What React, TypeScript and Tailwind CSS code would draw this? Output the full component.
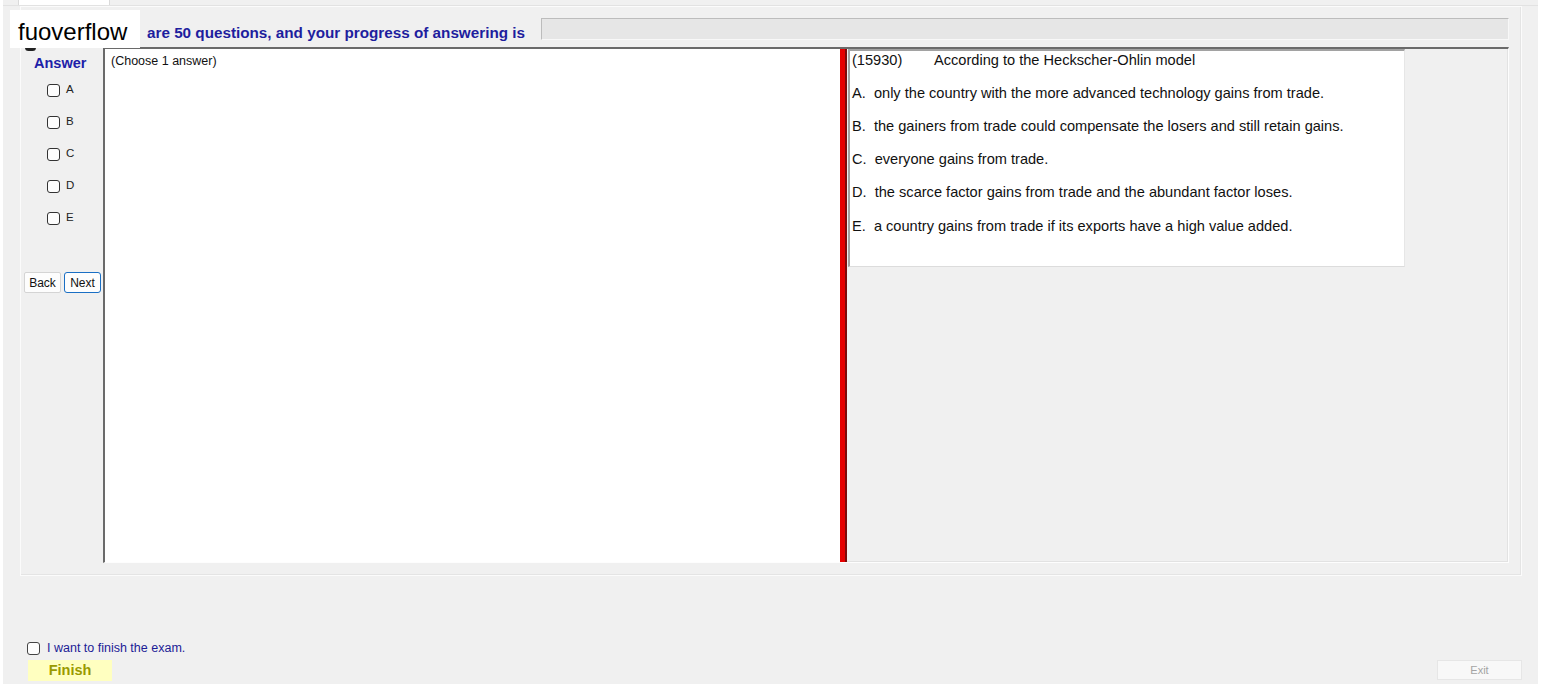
import React from 'react';

const options = [
  { key: 'A', text: 'only the country with the more advanced technology gains from trade.' },
  { key: 'B', text: 'the gainers from trade could compensate the losers and still retain gains.' },
  { key: 'C', text: 'everyone gains from trade.' },
  { key: 'D', text: 'the scarce factor gains from trade and the abundant factor loses.' },
  { key: 'E', text: 'a country gains from trade if its exports have a high value added.' },
];

const Box: React.FC<{ className?: string }> = ({ className }) => (
  <span className={'inline-block w-[13px] h-[13px] rounded-[3px] border border-[#333] bg-[#fdfdfd] ' + (className || '')} />
);

const App: React.FC = () => {
  return (
    <div className="relative w-[1542px] h-[690px] bg-white overflow-hidden font-['Liberation_Sans',Arial,sans-serif] text-black">
      {/* watermark */}
      <div className="absolute left-[25px] top-[44px] w-[11px] h-[7px] rounded-full bg-[#222]" />
      <div className="absolute left-[10px] top-[10px] w-[130px] h-[38px] bg-white flex items-center pl-[8px] pt-[6px] text-[24px] leading-none text-black z-10">
        fuoverflow
      </div>

      <div className="ml-[3px] w-[1535px] h-[684px] bg-[#f0f0f0] flex flex-col">
        {/* tab strip */}
        <div className="h-[6px] flex border-b border-[#e2e2e2]">
          <div className="ml-[15px] w-[92px] h-full bg-white border-x border-[#dadada]" />
        </div>

        {/* main panel */}
        <div className="ml-[17px] w-[1502px] h-[570px] border border-[#fbfbfb] shadow-[inset_-1px_-1px_0_#e4e4e4] flex flex-col">
          {/* header */}
          <div className="h-[40px] flex items-center justify-between pr-[12px]">
            <div className="pl-[126px] pt-[11px] text-[15.25px] font-bold text-[#1e1e9e] leading-none">
              are 50 questions, and your progress of answering is
            </div>
            <div className="w-[968px] h-[22px] mt-[4px] bg-[#e6e6e6] border border-t-[#bcbcbc] border-l-[#bcbcbc] border-b-[#f8f8f8] border-r-[#f8f8f8]" />
          </div>

          {/* body */}
          <div className="flex h-[516px]">
            {/* left answer column */}
            <div className="w-[82px] flex flex-col">
              <div className="pl-[13px] pt-[8px] h-[24px] text-[14.5px] font-bold text-[#2020a8] leading-[16px]">Answer</div>
              <div className="mt-[3px] flex flex-col">
                {options.map((o) => (
                  <div key={o.key} className="h-[32px] flex items-center pl-[26px] gap-[6px]">
                    <Box />
                    <span className="text-[11.5px] text-[#222] leading-none">{o.key}</span>
                  </div>
                ))}
              </div>
              <div className="mt-[38px] pl-[3px] flex gap-[3px]">
                <button className="w-[37px] h-[21px] bg-[#fdfdfd] border border-[#d4d4d4] rounded-[2px] text-[12px] text-[#111] leading-none">
                  Back
                </button>
                <button className="w-[37px] h-[21px] bg-[#fdfdfd] border border-[#1a6fc4] rounded-[3px] text-[12px] text-[#111] leading-none">
                  Next
                </button>
              </div>
            </div>

            {/* content area */}
            <div className="flex-1 mr-[12px] flex border-t-2 border-l-2 border-[#6a6a6a] border-r border-b border-r-[#fdfdfd] border-b-[#fdfdfd] shadow-[inset_-1px_-1px_0_#e2e2e2]">
              <div className="w-[735px] h-full bg-white pl-[6px] pt-[5px]">
                <div className="text-[12.5px] leading-[14px] text-[#111]">(Choose 1 answer)</div>
              </div>
              <div className="w-[7px] h-full bg-[#e50000] border-r-2 border-[#7d0a0a]" />
              <div className="flex-1 h-full">
                <div className="ml-[1px] w-[557px] h-[218px] bg-white border-t-2 border-l-2 border-[#a2a2a2] border-r border-b border-r-[#e6e6e6] border-b-[#dcdcdc] pl-[2px] text-[14.6px] text-[#111]">
                  <div className="h-[18px] leading-[18px] flex">
                    <span className="w-[82px]">(15930)</span>
                    <span>According to the Heckscher-Ohlin model</span>
                  </div>
                  {options.map((o, i) => (
                    <div key={o.key} className={(i === 4 ? 'mt-[16px]' : 'mt-[15px]') + ' h-[18px] leading-[18px] whitespace-pre'}>
                      {o.key + '.  ' + o.text}
                    </div>
                  ))}
                </div>
              </div>
            </div>
          </div>
        </div>

        {/* bottom */}
        <div className="flex-1 flex flex-col justify-end pb-[3px]">
          <div className="h-[16px] mb-[4px] flex items-center pl-[24px] gap-[7px]">
            <Box className="border-[#444]" />
            <span className="text-[12.5px] text-[#1c1c96] leading-none">I want to finish the exam.</span>
          </div>
          <div className="flex items-end justify-between pr-[16px]">
            <button className="ml-[25px] w-[84px] h-[21px] bg-[#ffffc0] text-[14.5px] font-bold text-[#9a9a00] leading-none">
              Finish
            </button>
            <button className="mb-[1px] w-[85px] h-[20px] bg-[#f8f8f8] border border-[#e6e6e6] text-[11px] text-[#a4a4a4] leading-none">
              Exit
            </button>
          </div>
        </div>
      </div>
    </div>
  );
};

export default App;
